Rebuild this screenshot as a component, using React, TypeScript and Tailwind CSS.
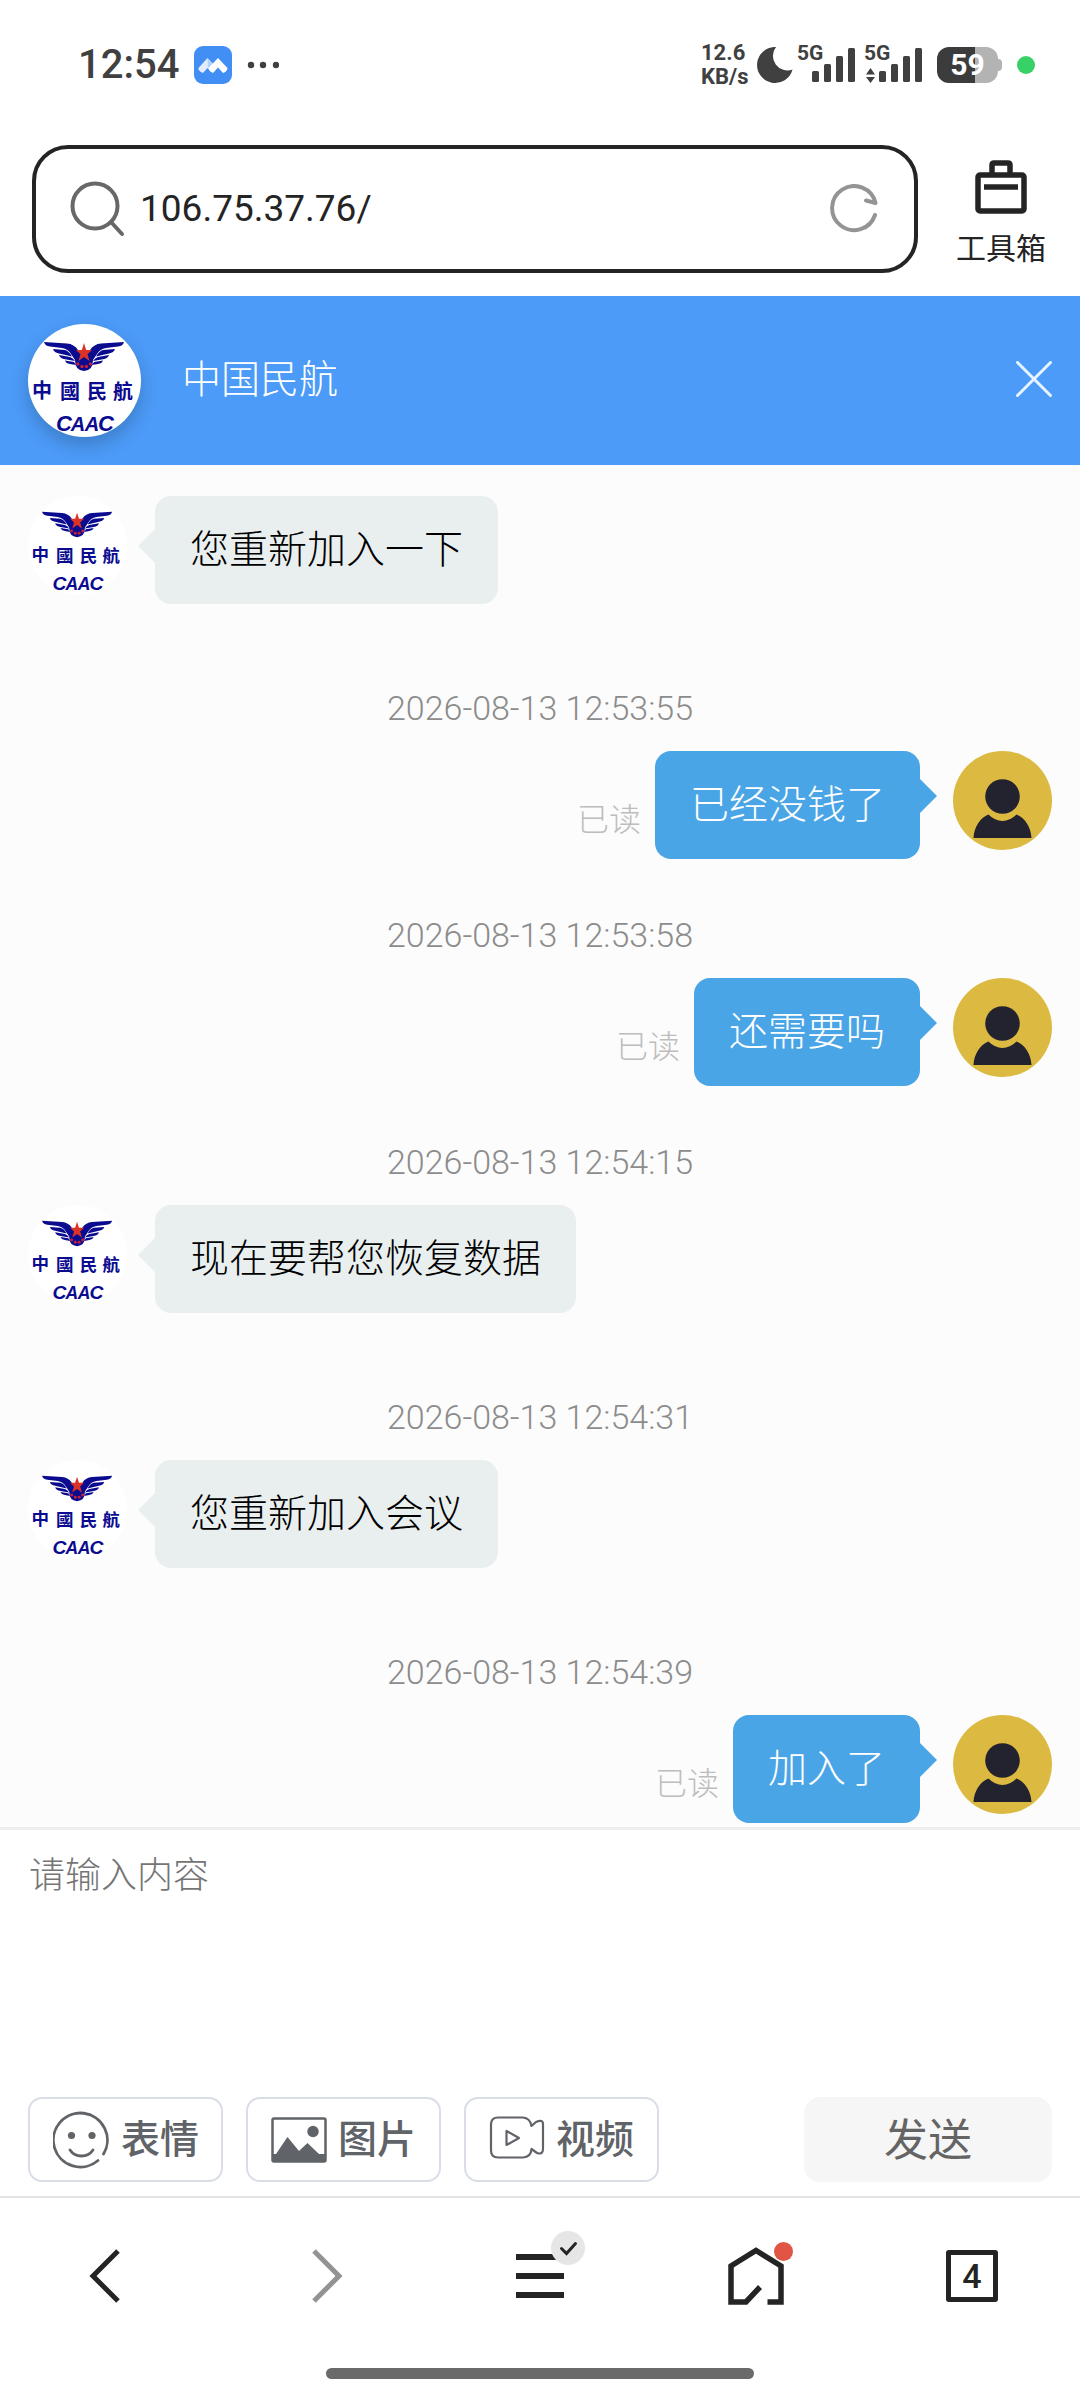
import React from "react";

const MESSAGES = [
  { side: "left", text: "您重新加入一下" },
  { side: "right", text: "已经没钱了", time: "2026-08-13 12:53:55" },
  { side: "right", text: "还需要吗", time: "2026-08-13 12:53:58" },
  { side: "left", text: "现在要帮您恢复数据", time: "2026-08-13 12:54:15" },
  { side: "left", text: "您重新加入会议", time: "2026-08-13 12:54:31" },
  { side: "right", text: "加入了", time: "2026-08-13 12:54:39" },
];

function CaacLogo() {
  return (
    <svg viewBox="0 0 113 113" className="size-full" role="img" aria-label="CAAC">
      <g fill="#0b0b8f">
        <path d="M16 18 L39 19.500 Q46 20 50 26 L56 32 L62 26 Q66 20 73 19.500 L96 18 Q95 22 90 22.600 L78 24 Q72 25 69 30 L65 36 Q65 46.500 56 47 Q47 46.500 47 36 L43 30 Q40 25 34 24 L22 22.600 Q17 22 16 18Z" />
        <path d="M25 25 L37 26 Q41 27 44 32.500 L31 29.500 Q26 28.500 25 25Z M31 31 L42 33 Q45 34 47 37 L37 35.300 Q32 34.500 31 31Z M37 36.500 L46 38 L48 41 L42 40 Q38 39.500 37 36.500Z" />
        <path d="M87 25 L75 26 Q71 27 68 32.500 L81 29.500 Q86 28.500 87 25Z M81 31 L70 33 Q67 34 65 37 L75 35.300 Q80 34.500 81 31Z M75 36.500 L66 38 L64 41 L70 40 Q74 39.500 75 36.500Z" />
      </g>
      <path d="M56 19 L58.200 26 H64 L59.500 30.200 L61.500 37 L56 33 L50.500 37 L52.500 30.200 L48 26 H53.800Z" fill="#dd3326" />
      <g fill="#c4213a">
        <circle cx="49.800" cy="40" r="1.700" />
        <circle cx="54" cy="42.500" r="1.700" />
        <circle cx="58.400" cy="42.500" r="1.700" />
        <circle cx="62.400" cy="40" r="1.700" />
      </g>
      <g fill="#0b0b8f" textAnchor="middle">
        <g fontSize="20" fontWeight="700" fontFamily="'Noto Sans CJK TC', sans-serif">
          <text x="14" y="74">中</text>
          <text x="42" y="75">國</text>
          <text x="69" y="75">民</text>
          <text x="95" y="75">航</text>
        </g>
        <g fontSize="24" fontWeight="700" fontStyle="italic" fontFamily="'Liberation Sans', sans-serif">
          <text x="36" y="107" fontSize="22">C</text>
          <text x="50" y="107" fontSize="20">A</text>
          <text x="64" y="107" fontSize="20">A</text>
          <text x="78" y="107" fontSize="22">C</text>
        </g>
      </g>
    </svg>
  );
}

function UserAvatar() {
  return (
    <svg viewBox="0 0 99 99" className="size-[99px] shrink-0" aria-hidden="true">
      <circle cx="49.500" cy="49.500" r="49.500" fill="#dcba41" />
      <circle cx="49.500" cy="45.500" r="17.300" fill="#23222f" />
      <path d="M20.500 87 C21 76 27 67 35.500 63.500 Q42 70 49.500 70 Q57 70 63.500 63.500 C72 67 78 76 78.500 87Z" fill="#23222f" />
    </svg>
  );
}

function Message({ side, text, time }: { side: string; text: string; time?: string }) {
  const stamp = time && (
    <time className="mb-[23px] block text-center font-[Roboto] text-[34px] leading-[40px] font-light text-[#8c8c8c]">{time}</time>
  );
  if (side === "left") {
    return (
      <li className="pb-[84px]">
        {stamp}
        <div className="flex items-start">
          <div className="size-[99px] shrink-0 overflow-hidden rounded-full bg-white"><CaacLogo /></div>
          <svg viewBox="0 0 17 34" className="mt-[33px] ml-[11px] h-[34px] w-[17px] shrink-0" aria-hidden="true">
            <path d="M17 0 V34 L0 17Z" fill="#e9efef" />
          </svg>
          <p className="rounded-2xl bg-[#e9efef] px-[35px] pt-[22px] pb-[30px] text-[39px] leading-[56px] font-light text-black">{text}</p>
        </div>
      </li>
    );
  }
  return (
    <li className="pb-14 last:pb-1">
      {stamp}
      <div className="flex items-start justify-end">
        <span className="mt-11 mr-[14px] text-[32px] leading-[44px] font-light text-[#bdbdbd]">已读</span>
        <p className="rounded-2xl bg-[#4aa5e6] px-[35px] pt-[22px] pb-[30px] text-[39px] leading-[56px] font-light text-white">{text}</p>
        <svg viewBox="0 0 17 34" className="mt-[28px] mr-4 h-[34px] w-[17px] shrink-0" aria-hidden="true">
          <path d="M0 0 V34 L17 17Z" fill="#4aa5e6" />
        </svg>
        <UserAvatar />
      </div>
    </li>
  );
}

function Signal({ data = false }: { data?: boolean }) {
  return (
    <svg viewBox="0 -4 59 52" className="h-[52px] w-[59px] shrink-0" fill="#404040" role="img" aria-label="5G">
      <text x="0" y="17" fontSize="21" fontWeight="700" fontFamily="Roboto">5G</text>
      <rect x="15" y="28" width="7" height="11" rx="1.500" />
      <rect x="27" y="21" width="7" height="18" rx="1.500" />
      <rect x="39" y="13" width="7" height="26" rx="1.500" />
      <rect x="51" y="5" width="7" height="34" rx="1.500" />
      {data && <path d="M2 31.500 L6.500 25 L11 31.500Z M2 34 L6.500 40 L11 34Z" />}
    </svg>
  );
}

function StatusBar() {
  return (
    <div className="flex h-[130px] items-center pr-[45px] pl-[78px] font-[Roboto] text-[#404040]">
      <span className="text-[40px] leading-none font-medium">12:54</span>
      <svg viewBox="0 0 38 38" className="ml-[15px] size-[38px]" aria-hidden="true">
        <rect width="38" height="38" rx="9" fill="#418ff5" />
        <path d="M4.500 22 L13.500 12 L20 19 L17 26 L13.500 22 L9 27 Q4 25 4.500 22Z" fill="#e3edfe" />
        <path d="M13.500 12 L19 18 L14 22.500Z" fill="#b5d1fb" />
        <path d="M14.500 22 L24 12 L33.500 22 Q33 26 29 27 L24 21.500 L19 27 Q15 25 14.500 22Z" fill="#fff" />
      </svg>
      <svg viewBox="0 0 32 8" className="ml-[15px] h-2 w-8" fill="#404040" aria-hidden="true">
        <circle cx="4" cy="4" r="3.200" />
        <circle cx="16" cy="4" r="3.200" />
        <circle cx="29" cy="4" r="3.200" />
      </svg>
      <div className="ml-auto w-[52px] text-[22px] leading-6 font-bold">
        <div>12.6</div>
        <div>KB/s</div>
      </div>
      <svg viewBox="0 0 36 37" className="ml-1 h-[37px] w-9" fill="#404040" aria-hidden="true">
        <path d="M19 0 A18 18 0 1 0 35.500 22.500 A14.500 14.500 0 0 1 19 0Z" />
      </svg>
      <div className="ml-1 flex gap-2">
        <Signal />
        <Signal data />
      </div>
      <div className="ml-[14px] flex h-9 w-[61px] items-center justify-center rounded-xl bg-linear-to-r from-[#3c3c3c] from-63% to-[#b3b3b3] to-63% text-[30px] leading-none font-bold text-white">
        59
      </div>
      <span className="h-3 w-1 rounded-r bg-[#b3b3b3]" />
      <span className="ml-[15px] size-[18px] rounded-full bg-[#38d167]" />
    </div>
  );
}

function AddressBar() {
  return (
    <div className="flex items-center pt-[15px] pb-[23px] pl-8">
      <div className="flex h-32 min-w-0 flex-1 items-center rounded-[36px] border-4 border-[#242424] pr-9 pl-[34px]">
        <svg viewBox="0 0 56 58" className="h-[58px] w-14 shrink-0" fill="none" stroke="#686868" strokeWidth="4" strokeLinecap="round" aria-hidden="true">
          <circle cx="25" cy="26" r="22.500" />
          <path d="M41 42 L52 54" />
        </svg>
        <input aria-label="网址" defaultValue="106.75.37.76/" className="ml-[14px] min-w-0 flex-1 bg-transparent font-[Roboto] text-[37px] leading-[50px] text-[#242424] outline-none" />
        <button aria-label="刷新" className="shrink-0">
          <svg viewBox="0 0 48 50" className="h-[50px] w-12" fill="none" stroke="#949494" strokeWidth="4" strokeLinecap="round" strokeLinejoin="round">
            <path d="M45 31 A22 22 0 1 1 45.500 19 L36 16.500" />
          </svg>
        </button>
      </div>
      <button className="flex w-[162px] flex-col items-center pt-3 pl-1 text-[#242424]">
        <svg viewBox="0 0 52 54" className="h-[54px] w-[52px]" fill="none" stroke="#242424" strokeWidth="5.500" aria-hidden="true">
          <rect x="3" y="15" width="46" height="36" rx="2" />
          <path d="M17 15 V5 Q17 3 19 3 H33 Q35 3 35 5 V15 M9 27 H43" />
        </svg>
        <span className="mt-[10px] mb-0.5 text-[30px] leading-[44px]">工具箱</span>
      </button>
    </div>
  );
}

function ToolButton({ label, children }: { label: string; children: React.ReactNode }) {
  return (
    <button className="flex h-[85px] w-[195px] items-center rounded-[14px] border-2 border-[#d9dee6] pl-[23px] text-[39px] leading-none font-medium text-[#606368]">
      {children}
      <span className="ml-[11px] pb-1.5">{label}</span>
    </button>
  );
}

export default function App() {
  return (
    <div className="flex min-h-screen flex-col bg-white font-['Noto_Sans_CJK_SC',sans-serif]">
      <StatusBar />
      <AddressBar />

      <header className="flex h-[169px] items-center bg-[#4c9bf8] px-7">
        <div className="size-[113px] overflow-hidden rounded-full bg-white shadow-[0_8px_18px_rgba(0,0,0,0.2)]"><CaacLogo /></div>
        <h1 className="ml-[41px] pb-[10px] text-[39px] leading-[56px] font-light text-white">中国民航</h1>
        <button aria-label="关闭" className="ml-auto pb-1">
          <svg viewBox="0 0 36 36" className="size-9" stroke="#e8f4ff" strokeWidth="3" strokeLinecap="round">
            <path d="M1.500 1.500 L34.500 34.500 M34.500 1.500 L1.500 34.500" />
          </svg>
        </button>
      </header>

      <main className="grow bg-[#fcfcfc] px-7 pt-[31px]">
        <ul>
          {MESSAGES.map((m, i) => <Message key={i} {...m} />)}
        </ul>
      </main>

      <section className="border-t-[3px] border-[#eeeeee] pb-[14px]">
        <textarea
          aria-label="消息"
          placeholder="请输入内容"
          className="block h-[267px] w-full resize-none bg-transparent px-[29px] pt-4 text-[36px] leading-[52px] font-light outline-none placeholder:text-[#757575]"
        />
        <div className="flex items-center gap-[23px] px-7">
          <ToolButton label="表情">
            <svg viewBox="0 0 57 58" className="h-[58px] w-[57px] shrink-0" fill="none" stroke="#606368" strokeWidth="2.800" strokeLinecap="round" aria-hidden="true">
              <path d="M45 49.500 A27 27 0 1 1 50.500 43" />
              <path d="M17 39 Q21 45 28.500 45 Q36 45 40 39" />
              <circle cx="18.500" cy="24.500" r="3.600" fill="#606368" stroke="none" />
              <circle cx="39" cy="24.500" r="3.600" fill="#606368" stroke="none" />
            </svg>
          </ToolButton>
          <ToolButton label="图片">
            <svg viewBox="0 0 56 46" className="h-[46px] w-14 shrink-0" fill="#606368" aria-hidden="true">
              <rect x="1.500" y="1.500" width="53" height="43" rx="1.500" fill="none" stroke="#606368" strokeWidth="2.500" />
              <path d="M2 44 V37 H5 L16.500 20 L28 34 L36.500 26 L48 37 H54 V44Z" />
              <circle cx="42" cy="14.500" r="5.700" />
            </svg>
          </ToolButton>
          <ToolButton label="视频">
            <svg viewBox="0 0 56 48" className="h-12 w-14 shrink-0" fill="none" stroke="#606368" strokeWidth="2.200" strokeLinejoin="round" aria-hidden="true">
              <path d="M9 1.500 H34 Q41 2 42.500 10 L47 6 Q54 3 54 8 V33 Q54 39 48 37 L42.500 33 Q42 41 34 41.500 H9 Q2 41.500 2 34.500 V8.500 Q2 1.500 9 1.500Z" />
              <path d="M17.500 15 V29 L30 22Z" />
            </svg>
          </ToolButton>
          <button className="ml-auto h-[85px] w-[248px] rounded-2xl bg-[#f6f6f6] pb-1.5 text-[44px] leading-none text-[#646464]">发送</button>
        </div>
      </section>

      <nav className="grid h-[158px] grid-cols-5 items-center justify-items-center border-t-2 border-[#e3e3e3]">
        <button aria-label="后退">
          <svg viewBox="0 0 32 54" className="mr-1.5 h-[54px] w-8" fill="none" stroke="#242424" strokeWidth="5">
            <path d="M29 2 L4 27 L29 52" />
          </svg>
        </button>
        <button aria-label="前进">
          <svg viewBox="0 0 32 54" className="ml-1.5 h-[54px] w-8" fill="none" stroke="#939393" strokeWidth="5">
            <path d="M3 2 L28 27 L3 52" />
          </svg>
        </button>
        <button aria-label="菜单" className="relative">
          <svg viewBox="0 0 48 46" className="h-[46px] w-12" fill="#242424">
            <path d="M0 1 H48 V7 H0Z M0 20 H48 V26 H0Z M0 39 H48 V45 H0Z" />
          </svg>
          <svg viewBox="0 0 34 34" className="absolute -top-[22px] -right-[21px] size-[34px]" aria-hidden="true">
            <circle cx="17" cy="17" r="17" fill="#e6e6e6" />
            <path d="M10.500 17.500 L15.500 22.500 L24.500 12.500" fill="none" stroke="#242424" strokeWidth="3" strokeLinecap="round" />
          </svg>
        </button>
        <button aria-label="主页" className="relative">
          <svg viewBox="0 0 56 58" className="h-[58px] w-14" fill="none" stroke="#242424" strokeWidth="5.500">
            <path d="M39.500 55 H53 V19 L28 3.500 L3 19 V55 H18 L32 40" />
          </svg>
          <span className="absolute -top-[5px] -right-[9px] size-[19px] rounded-full bg-[#e05544]" />
        </button>
        <button aria-label="标签页" className="flex size-[52px] items-center justify-center rounded-[3px] border-[5px] border-[#242424] font-[Roboto] text-[34px] leading-none font-medium text-[#242424]">
          4
        </button>
      </nav>
      <div className="flex justify-center pt-[14px] pb-[21px]">
        <span className="h-[11px] w-[428px] rounded-full bg-[#6a6a6a]" />
      </div>
    </div>
  );
}
